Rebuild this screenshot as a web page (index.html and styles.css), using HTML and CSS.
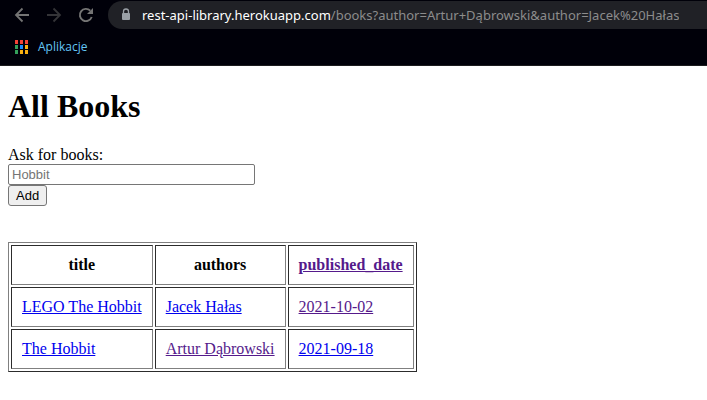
FILE: index.html
```html
<!DOCTYPE html>
<html lang="pl">
<head>
<meta charset="utf-8">
<title>All Books</title>
<link rel="stylesheet" href="styles.css">
</head>
<body>
<header class="browser">
  <div class="toolbar">
    <button class="nav" type="button" aria-label="Back">
      <svg width="16" height="16" viewBox="0 0 16 16"><path d="M15 8H2M8.500 1.500 2 8l6.500 6.500" fill="none" stroke="#747474" stroke-width="1.800"/></svg>
    </button>
    <button class="nav" type="button" aria-label="Forward" disabled>
      <svg width="16" height="16" viewBox="0 0 16 16"><path d="M1 8h13M7.500 1.500 14 8l-6.500 6.500" fill="none" stroke="#343438" stroke-width="1.800"/></svg>
    </button>
    <button class="nav" type="button" aria-label="Reload">
      <svg width="16" height="16" viewBox="0 0 16 16"><path d="M13.700 10A6.100 6.100 0 1 1 12.300 3.700" fill="none" stroke="#747474" stroke-width="1.900"/><path d="M15 1v6H9z" fill="#747474"/></svg>
    </button>
    <div class="address">
      <svg class="lock" width="10" height="14" viewBox="0 0 10 14"><path d="M2.500 6V3.500a2.500 2.500 0 0 1 5 0V6" fill="none" stroke="#9aa0a6" stroke-width="1.300"/><rect x="1" y="5" width="8" height="7" rx="1" fill="#9aa0a6"/></svg>
      <span class="url"><span class="host">rest-api-library.herokuapp.com</span>/books?author=Artur+Dąbrowski&amp;author=Jacek%20Hałas</span>
    </div>
  </div>
  <nav class="bookmarks">
    <a class="apps" href="#">
      <svg width="13" height="14" viewBox="0 0 13 14">
        <path d="M0 0h3v4H0zM5 0h3v4H5zM10 0h3v4h-3z" fill="#f44336"/>
        <path d="M0 5h3v4H0zM0 10h3v4H0z" fill="#34a05a"/>
        <path d="M5 5h3v4H5z" fill="#1a8cff"/>
        <path d="M10 5h3v4h-3zM10 10h3v4h-3zM5 10h3v4H5z" fill="#fbb110"/>
      </svg>
      Aplikacje
    </a>
  </nav>
</header>
<main class="page">
  <h1>All Books</h1>
  <form class="search">
    <label for="book">Ask for books:</label>
    <input id="book" type="text" placeholder="Hobbit">
    <button class="add" type="button">Add</button>
  </form>
  <table class="books">
    <thead>
      <tr><th>title</th><th>authors</th><th><a class="visited" href="#">published_date</a></th></tr>
    </thead>
    <tbody>
      <tr><td><a href="#">LEGO The Hobbit</a></td><td><a href="#">Jacek Hałas</a></td><td><a class="visited" href="#">2021-10-02</a></td></tr>
      <tr><td><a href="#">The Hobbit</a></td><td><a class="visited" href="#">Artur Dąbrowski</a></td><td><a href="#">2021-09-18</a></td></tr>
    </tbody>
  </table>
</main>
</body>
</html>
```
FILE: styles.css
```css
* { box-sizing: border-box; }

body {
  margin: 0;
  background: #fff;
  color: #000;
  font: 16px/18px "Liberation Serif", "Times New Roman", serif;
}

.browser {
  background: #000009;
  border-bottom: 1px solid #1c1c1e;
  font-family: "Open Sans", "Noto Sans", sans-serif;
}

.toolbar {
  display: flex;
  align-items: center;
  gap: 16px;
  padding: 1px 0 0 14px;
}

.nav {
  display: flex;
  padding: 0;
  border: 0;
  background: none;
}

.address {
  display: flex;
  flex: 1;
  align-items: center;
  gap: 11px;
  min-width: 0;
  height: 28px;
  margin-left: -2px;
  padding-left: 13px;
  border-radius: 14px 0 0 14px;
  background: #202126;
}

.lock { flex: none; }

.url {
  overflow: hidden;
  color: #8c8c8c;
  font-family: "Noto Sans", "Open Sans", sans-serif;
  font-size: 13px;
  white-space: nowrap;
}

.host { color: #fff; }

.bookmarks {
  display: flex;
  align-items: center;
  height: 36px;
  padding-left: 15px;
}

.apps {
  display: flex;
  align-items: center;
  gap: 10px;
  color: #63c5f5;
  font-size: 12px;
  text-decoration: none;
}

.page { padding: 21px 8px; }

h1 {
  margin: 0 0 21px;
  font-size: 32px;
  line-height: 38px;
}

.search {
  display: flex;
  flex-direction: column;
  align-items: flex-start;
  margin-bottom: 36px;
}

.search input,
.add {
  height: 21px;
  border: 1px solid #767676;
  border-radius: 2px;
  font: 13px/15px "Liberation Sans", Arial, sans-serif;
}

.search input {
  width: 247px;
  max-width: 100%;
  padding: 0 3px;
}

.search input::placeholder { color: #757575; }

.add {
  padding: 0 7px;
  border-radius: 3px;
  background: #efefef;
  color: #000;
}

.books {
  border: 1px solid;
  border-color: #808080 #2c2c2c #2c2c2c #808080;
  border-spacing: 2px;
}

.books th,
.books td {
  padding: 10px;
  border: 1px solid;
  border-color: #2c2c2c #808080 #808080 #2c2c2c;
}

.books a { color: #0000ee; }

.books .visited { color: #551a8b; }
```
